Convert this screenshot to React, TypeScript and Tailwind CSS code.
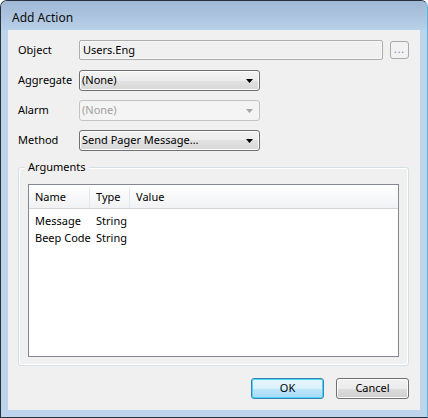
import React from "react";

function Combo({ value, disabled }: { value: string; disabled?: boolean }) {
  if (disabled) {
    return (
      <div className="flex h-[21px] w-[181px] items-center rounded-[3px] border border-[#c3c3c3] bg-[#f4f4f4] pl-[2px] pr-[6px] text-[#a2a2a2]">
        <span className="flex-1">{value}</span>
        <svg width="7" height="4" viewBox="0 0 7 4">
          <path d="M0 0h7L3.5 4z" fill="#a6a6a6" />
        </svg>
      </div>
    );
  }
  return (
    <div className="flex h-[21px] w-[181px] items-center rounded-[3px] border border-[#707070] bg-[linear-gradient(#f3f3f3,#ececec_50%,#e1e1e1_50%,#d8d8d8)] pl-[2px] pr-[6px] text-black shadow-[inset_0_0_0_1px_#fbfbfb]">
      <span className="flex-1">{value}</span>
      <svg width="7" height="4" viewBox="0 0 7 4">
        <path d="M0 0h7L3.5 4z" fill="#000" />
      </svg>
    </div>
  );
}

function Row({ label, children }: { label: string; children: React.ReactNode }) {
  return (
    <div className="flex items-center">
      <span className="w-[61px] shrink-0">{label}</span>
      {children}
    </div>
  );
}

export default function App() {
  return (
    <div className="flex h-[418px] w-[428px] flex-col overflow-hidden rounded-t-[7px] border border-[#27313d] border-r-[#4fb8dc] bg-[#bdd4ec] font-['Noto_Sans',sans-serif] text-[11px] text-black">
      {/* title bar */}
      <div className="flex h-[29px] shrink-0 items-center bg-gradient-to-b from-[#9fb8d5] to-[#b9d0e9] pl-[11px] pt-[5px] text-[12px] text-[#0c0c0c]">
        Add Action
      </div>

      {/* client area */}
      <div className="mx-[7px] flex h-[380px] flex-col bg-[#f0f0f0] pl-[10px] pr-[11px]">
        <div className="mt-[10px] flex h-[20px] items-center">
          <span className="w-[61px] shrink-0 pt-[1px]">Object</span>
          <div className="flex h-[20px] flex-1 items-center rounded-[2px] border border-[#adadad] bg-[#f0f0f0] pl-[3px] pt-[1px] shadow-[inset_0_0_0_1px_#f7f7f7]">
            Users.Eng
          </div>
          <div className="ml-[7px] flex h-[18px] w-[19px] items-center justify-center rounded-[3px] border border-[#a9a9a9] bg-[#f2f2f2] pb-[2px] text-[10px] tracking-[1px] text-[#7c78a0]">
            ...
          </div>
        </div>

        <div className="mt-[10px]">
          <Row label="Aggregate">
            <Combo value="(None)" />
          </Row>
        </div>
        <div className="mt-[9px]">
          <Row label="Alarm">
            <Combo value="(None)" disabled />
          </Row>
        </div>
        <div className="mt-[9px]">
          <Row label="Method">
            <Combo value="Send Pager Message…" />
          </Row>
        </div>

        {/* group box */}
        <div className="relative mt-[16px] h-[199px] rounded-[3px] border border-[#d5dfe5] px-[9px] pb-[8px] pt-[16px] shadow-[inset_0_0_0_1px_#ffffff]">
          <span className="absolute -top-[9px] left-[6px] bg-[#f0f0f0] px-[3px]">Arguments</span>
          <div className="flex h-full flex-col border border-[#828790] bg-white">
            <div className="flex h-[24px] shrink-0 items-center border-b border-[#d5d5d5] bg-gradient-to-b from-white to-[#f1f2f4] pt-[2px]">
              <span className="flex h-full w-[61px] items-center border-r border-[#e3e8ee] pl-[6px]">Name</span>
              <span className="flex h-full w-[40px] items-center border-r border-[#e3e8ee] pl-[6px]">Type</span>
              <span className="flex h-full flex-1 items-center pl-[6px]">Value</span>
            </div>
            <div className="mt-[4px] flex h-[17px] items-center">
              <span className="w-[61px] pl-[6px]">Message</span>
              <span className="pl-[6px]">String</span>
            </div>
            <div className="flex h-[17px] items-center">
              <span className="w-[61px] whitespace-nowrap pl-[6px]">Beep Code</span>
              <span className="pl-[6px]">String</span>
            </div>
          </div>
        </div>

        {/* buttons */}
        <div className="mt-[12px] flex justify-end gap-[12px]">
          <button className="h-[21px] w-[73px] rounded-[3px] border border-[#3c7fb1] bg-[linear-gradient(#eaf6fd,#d9f0fc_50%,#bee6fd_50%,#a7d9f5)] text-black shadow-[inset_0_0_0_1px_#48d7fb]">
            OK
          </button>
          <button className="h-[21px] w-[73px] rounded-[3px] border border-[#707070] bg-[linear-gradient(#f2f2f2,#ebebeb_50%,#dddddd_50%,#cfcfcf)] text-black shadow-[inset_0_0_0_1px_#fcfcfc]">
            Cancel
          </button>
        </div>
      </div>
    </div>
  );
}
